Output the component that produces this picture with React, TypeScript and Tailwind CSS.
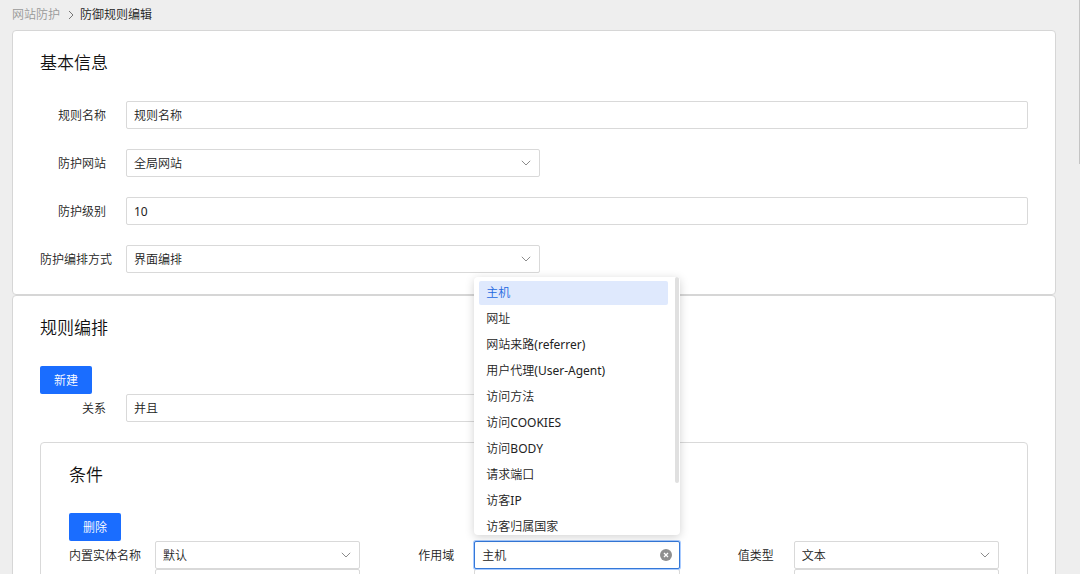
import { useState } from "react";
import type { ReactNode } from "react";

const controlClass =
  "block h-7 w-full rounded-xs border border-[#d9d9d9] bg-white px-[7px] text-xs text-[#222] outline-none";

function Chevron() {
  return (
    <svg
      className="pointer-events-none absolute top-2 right-2 h-3 w-3 text-[#8c8c8c]"
      viewBox="0 0 12 12"
      fill="none"
      stroke="currentColor"
      strokeWidth="1"
      aria-hidden="true"
    >
      <path d="M1.8 3.8 6 8l4.2-4.2" />
    </svg>
  );
}

function Field({ id, label, children }: { id: string; label: string; children: ReactNode }) {
  return (
    <div className="flex items-center">
      <label htmlFor={id} className="w-[86px] shrink-0 pt-0.5 pr-5 text-right whitespace-nowrap">
        {label}
      </label>
      <div className="min-w-0 flex-1">{children}</div>
    </div>
  );
}

function Select({ id, value, className = "" }: { id: string; value: string; className?: string }) {
  return (
    <div className={`relative ${className}`}>
      <select id={id} defaultValue={value} className={`${controlClass} appearance-none pt-0.5`}>
        <option>{value}</option>
      </select>
      <Chevron />
    </div>
  );
}

function PrimaryButton({ children }: { children: ReactNode }) {
  return (
    <button
      type="button"
      className="block h-7 rounded-xs bg-[#1a6dff] px-3.5 pt-0.5 text-xs text-white"
    >
      {children}
    </button>
  );
}

function CardTitle({ children }: { children: ReactNode }) {
  return <h2 className="mb-[26px] text-[17px] leading-6 font-[350] text-[#111]">{children}</h2>;
}

const scopes = [
  "主机",
  "网址",
  "网站来路(referrer)",
  "用户代理(User-Agent)",
  "访问方法",
  "访问COOKIES",
  "访问BODY",
  "请求端口",
  "访客IP",
  "访客归属国家",
];

function ScopePicker({ id }: { id: string }) {
  const [scope, setScope] = useState("主机");
  return (
    <div className="relative">
      <input
        id={id}
        role="combobox"
        aria-expanded="true"
        aria-controls="scope-list"
        value={scope}
        onChange={(e) => setScope(e.target.value)}
        className="block h-7 w-full rounded-xs border border-[#3478d8] bg-white px-[7px] text-xs text-[#222] ring-1 ring-[#a9cbff] outline-none"
      />
      <button
        type="button"
        aria-label="清除"
        onClick={() => setScope("")}
        className="absolute top-2 right-2 h-3 w-3"
      >
        <svg viewBox="0 0 12 12" className="h-3 w-3" aria-hidden="true">
          <circle cx="6" cy="6" r="6" fill="#8f8f8f" />
          <path d="M4 4l4 4M8 4 4 8" stroke="#fff" strokeWidth="1.3" />
        </svg>
      </button>
      <div className="absolute inset-x-0 bottom-full z-10 mb-1.5 h-[258px] overflow-hidden rounded-sm bg-white shadow-[0_2px_10px_rgba(0,0,0,0.18)]">
        <ul id="scope-list" role="listbox" className="flex flex-col gap-0.5 pt-1 pr-3 pl-[5px]">
          {scopes.map((item) => (
            <li
              key={item}
              role="option"
              aria-selected={item === scope}
              onClick={() => setScope(item)}
              className={`h-6 shrink-0 rounded-xs px-[7px] leading-6 whitespace-nowrap ${
                item === scope ? "bg-[#dfe9fd] text-[#2468e0]" : "text-[#222]"
              }`}
            >
              {item}
            </li>
          ))}
        </ul>
        <div className="absolute top-0 right-px h-[206px] w-1 rounded-full bg-[#e0e0e0]" />
      </div>
    </div>
  );
}

export default function App() {
  return (
    <div className="relative h-screen overflow-hidden bg-[#eee] pr-6 pl-3 font-['Noto_Sans','Noto_Sans_CJK_SC_DemiLight','Noto_Sans_CJK_SC',sans-serif] text-xs text-[#222]">
      <nav aria-label="位置" className="flex h-[30px] items-center">
        <a href="#sites" className="text-[#999]">
          网站防护
        </a>
        <svg
          className="mx-[5px] h-2.5 w-2.5 text-[#777]"
          viewBox="0 0 10 10"
          fill="none"
          stroke="currentColor"
          aria-hidden="true"
        >
          <path d="M4 1l4 4-4 4" />
        </svg>
        <span aria-current="page">防御规则编辑</span>
      </nav>

      <section className="rounded border border-[#d6d6d6] bg-white px-[27px] pt-5 pb-[21px]">
        <CardTitle>基本信息</CardTitle>
        <div className="flex flex-col gap-5">
          <Field id="name" label="规则名称">
            <input id="name" defaultValue="规则名称" className={controlClass} />
          </Field>
          <Field id="site" label="防护网站">
            <Select id="site" value="全局网站" className="w-[414px] max-w-full" />
          </Field>
          <Field id="level" label="防护级别">
            <input id="level" defaultValue="10" className={controlClass} />
          </Field>
          <Field id="mode" label="防护编排方式">
            <Select id="mode" value="界面编排" className="w-[414px] max-w-full" />
          </Field>
        </div>
      </section>

      <section className="rounded border border-[#d6d6d6] bg-white px-[27px] py-5">
        <CardTitle>规则编排</CardTitle>
        <PrimaryButton>新建</PrimaryButton>
        <Field id="relation" label="关系">
          <Select id="relation" value="并且" className="w-[414px] max-w-full" />
        </Field>

        <section className="mt-5 rounded border border-[#d9d9d9] px-7 py-5">
          <CardTitle>条件</CardTitle>
          <PrimaryButton>删除</PrimaryButton>
          <div className="grid grid-cols-3 gap-x-7">
            <Field id="entity" label="内置实体名称">
              <Select id="entity" value="默认" />
            </Field>
            <Field id="scope" label="作用域">
              <ScopePicker id="scope" />
            </Field>
            <Field id="type" label="值类型">
              <Select id="type" value="文本" />
            </Field>
            <Field id="extra-1" label="">
              <input id="extra-1" className={controlClass} />
            </Field>
            <Field id="extra-2" label="">
              <input id="extra-2" className={controlClass} />
            </Field>
            <Field id="extra-3" label="">
              <input id="extra-3" className={controlClass} />
            </Field>
          </div>
        </section>
      </section>

      <div className="absolute top-0 right-0 h-[164px] w-px bg-[#c4c4c4]" />
    </div>
  );
}
